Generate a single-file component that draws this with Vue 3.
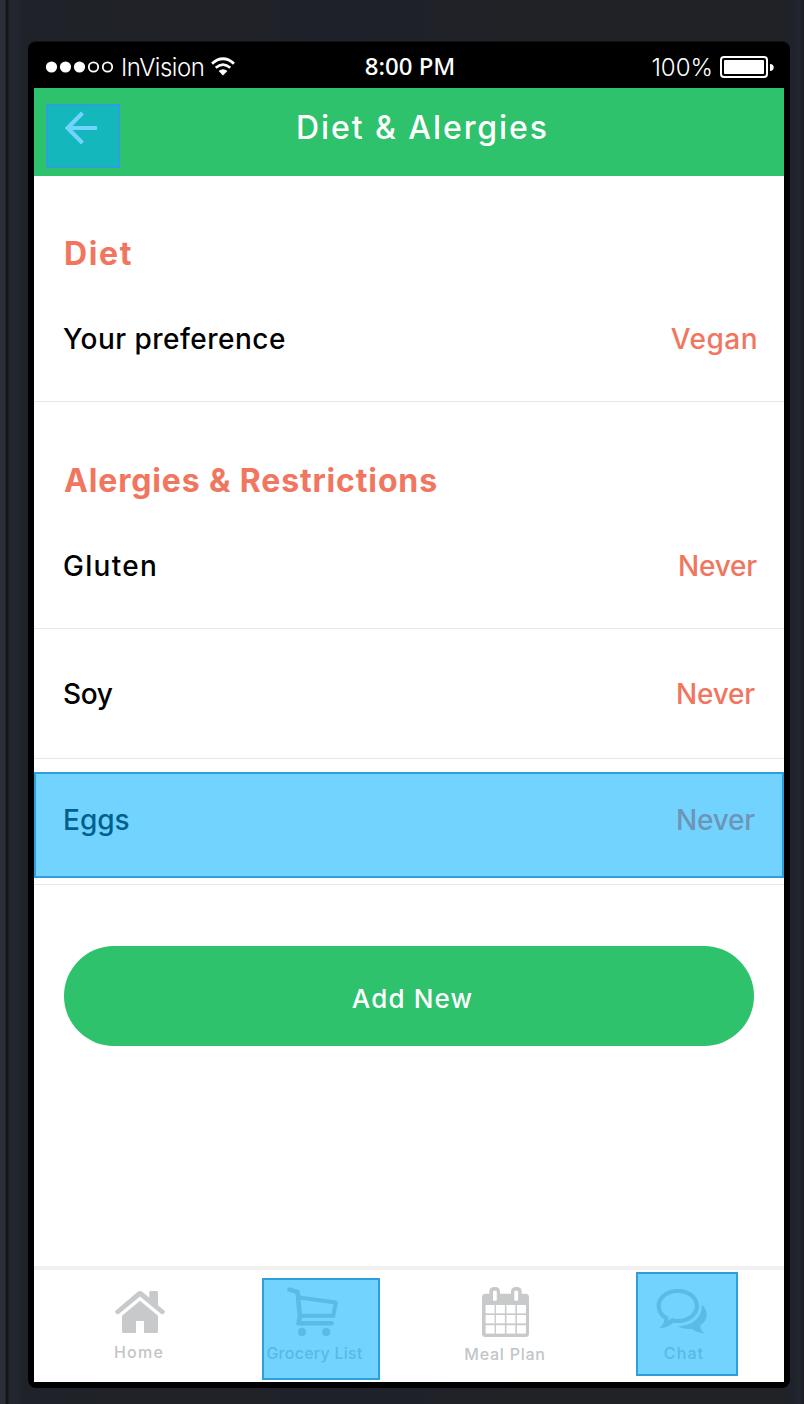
<script setup>
const dietRows = [{ label: 'Your preference', value: 'Vegan', cls: 'preference' }]
const allergyRows = [
  { label: 'Gluten', value: 'Never', cls: 'gluten' },
  { label: 'Soy', value: 'Never', cls: 'soy' },
  { label: 'Eggs', value: 'Never', cls: 'eggs', hotspot: true },
]
</script>

<template>
  <div class="device">
    <div class="bezel">
      <div class="status">
        <div class="carrier">
          <svg class="signal" width="70" height="14" viewBox="0 0 70 14">
            <circle cx="6.5" cy="7" r="5.6" fill="#fff" />
            <circle cx="20.5" cy="7" r="5.6" fill="#fff" />
            <circle cx="34.5" cy="7" r="5.6" fill="#fff" />
            <circle cx="48.5" cy="7" r="4.7" fill="none" stroke="#fff" stroke-width="1.8" />
            <circle cx="62.5" cy="7" r="4.7" fill="none" stroke="#fff" stroke-width="1.8" />
          </svg>
          <span class="carrier-name">InVision</span>
          <svg class="wifi" width="26" height="20" viewBox="0 0 26 20">
            <path d="M2 6.6 Q13 -3 24 6.6" fill="none" stroke="#fff" stroke-width="2.8" />
            <path d="M5.7 10.7 Q13 4.4 20.3 10.7" fill="none" stroke="#fff" stroke-width="2.6" />
            <path d="M8.6 14 Q13 10.4 17.4 14 L13 18.6 Z" fill="#fff" />
          </svg>
        </div>
        <span class="time">8:00 PM</span>
        <div class="power">
          <span class="percent">100%</span>
          <svg width="55" height="22" viewBox="0 0 55 22">
            <rect x="1" y="1" width="46" height="20" rx="3" fill="none" stroke="#fff" stroke-width="2" />
            <rect x="4" y="4" width="40" height="14" rx="1" fill="#fff" />
            <path d="M50 8 C55 8 55 15 50 15 Z" fill="#fff" />
          </svg>
        </div>
      </div>

      <div class="screen">
        <header class="header">
          <button class="back" aria-label="Back">
            <svg width="34" height="34" viewBox="0 0 34 34">
              <path d="M33 17 H4 M18.5 2 L3.5 17 L18.5 32" fill="none" stroke="#fff" stroke-width="4" />
            </svg>
            <span class="hotspot"></span>
          </button>
          <h1>Diet &amp; Alergies</h1>
        </header>

        <main class="content">
          <h2 class="diet-title">Diet</h2>
          <div v-for="r in dietRows" :key="r.label" class="row" :class="r.cls">
            <span class="label">{{ r.label }}</span>
            <span class="value">{{ r.value }}</span>
          </div>
          <h2 class="allergy-title">Alergies &amp; Restrictions</h2>
          <div v-for="r in allergyRows" :key="r.label" class="row" :class="r.cls">
            <span class="label">{{ r.label }}</span>
            <span class="value">{{ r.value }}</span>
            <span v-if="r.hotspot" class="hotspot"></span>
          </div>
          <button class="add"><span>Add New</span></button>
        </main>

        <nav class="tabs">
          <div class="tab home">
            <svg width="50" height="42" viewBox="0 0 50 42">
              <path d="M22.8 .8 Q25 -.8 27.2 .8 L34.3 6.8 V1.2 Q34.3 0 35.5 0 H41.8 Q43 0 43 1.2 V14.2 L49.5 19.7 Q50.4 20.7 49.5 21.7 L48.2 23.1 Q47.2 24 46.2 23.1 L25 5.4 L3.8 23.1 Q2.8 24 1.8 23.1 L.5 21.7 Q-.4 20.7 .5 19.7 Z" />
              <path d="M25 9.8 L43 24.8 V40.4 Q43 42 41.4 42 H29 V30 H21 V42 H8.6 Q7 42 7 40.4 V24.8 Z" />
            </svg>
            <span>Home</span>
          </div>
          <div class="tab grocery">
            <svg width="54" height="52" viewBox="0 0 54 52">
              <g fill="none" stroke="#c8c9cb" stroke-width="4.6" stroke-linecap="round" stroke-linejoin="round">
                <path d="M3.4 3.6 L11.6 6 L14 31 L12.4 37.3 H45.6" />
                <path d="M13 11.5 L49.8 16.6 L47.3 29.8 H14" stroke-width="4" />
              </g>
              <circle cx="16" cy="46" r="4.2" />
              <circle cx="40.2" cy="46" r="4.2" />
            </svg>
            <span>Grocery List</span>
            <i class="hotspot"></i>
          </div>
          <div class="tab meal">
            <svg width="48" height="52" viewBox="0 0 48 52">
              <rect x="0" y="7.7" width="47" height="43.3" rx="3.5" />
              <rect x="7.3" y="1" width="10.7" height="16" rx="4.5" />
              <rect x="29" y="1" width="10.7" height="16" rx="4.5" />
              <g fill="#fff">
                <rect x="11" y="4.7" width="3.8" height="10" rx="1" />
                <rect x="32.3" y="4.7" width="3.8" height="10" rx="1" />
                <template v-for="y in [19, 29, 39.2]" :key="y">
                  <rect v-for="x in [3.6, 13.9, 24.4, 34.9]" :key="x" :x="x" :y="y" width="9" height="8.4" />
                </template>
              </g>
            </svg>
            <span>Meal Plan</span>
          </div>
          <div class="tab chat">
            <svg width="52" height="48" viewBox="0 0 52 48">
              <path fill-rule="evenodd" d="M21.7 1 C33.8 1 43 8.4 43 18 C43 27.6 33.8 35 21.7 35 Q19.5 35 17.3 34.7 C13.5 38 8.5 40 3.2 40.1 C6.3 37.6 8 35 8.3 31.5 C3.5 28.3 .7 23.5 .7 18 C.7 8.4 9.8 1 21.7 1 Z M21.7 5 C12 5 4.8 10.8 4.8 18 C4.8 22.7 7.7 26.6 12.6 29 L12 32.8 L15.8 30.1 Q18.6 31 21.7 31 C31.5 31 38.8 25.2 38.8 18 C38.8 10.8 31.5 5 21.7 5 Z" />
              <path d="M45.8 16.6 C52.4 22.5 52.8 31.8 44.2 37.2 C44.4 41 46 43.5 48.8 45.5 C43.5 45.5 39.3 43.5 35.8 40.8 C30.7 41.5 26 40.5 22 38.3 C36 38 46.5 30 45.8 16.6 Z" />
            </svg>
            <span>Chat</span>
            <i class="hotspot"></i>
          </div>
        </nav>
      </div>
    </div>
  </div>
</template>

<style>
body { margin: 0; background: #202329; }
</style>

<style scoped>
* { box-sizing: border-box; }
.device {
  width: 804px; height: 1404px; padding: 41px 14px 16px 28px; overflow: hidden;
  background: linear-gradient(90deg, #2b2f39 0, #2b2f39 5px, #15171b 6px, #15171b 8px, #22262f 9px, #22262f 17px, #1f2228 24px, #202227 240px, #1e212a 320px, #202226 520px, #202226 780px, #1e222b 794px, #242630 799px, #1a1d24 804px);
  font-family: Inter, "Liberation Sans", sans-serif;
}
.bezel { width: 762px; height: 1347px; padding: 0 6px 6px; background: #000; border-radius: 8px; border-top: 1px solid #101114; }
.status { height: 46px; display: grid; grid-template-columns: 1fr auto 1fr; align-items: center; padding: 4px 9px 0 11px; color: #fff; }
.carrier, .power { display: flex; align-items: center; }
.power { justify-content: flex-end; }
.carrier-name { margin-left: 6px; padding-top: 2px; font: 300 24px/28px Inter, sans-serif; letter-spacing: -.5px; }
.wifi { margin-left: 6px; }
.time { padding-bottom: 2px; font: 500 24px/28px "Noto Sans", sans-serif; }
.percent { margin-right: 7px; padding-top: 2px; font: 300 24px/28px Inter, sans-serif; letter-spacing: 0; }
.screen { display: flex; flex-direction: column; width: 750px; height: 1294px; background: #fff; }
.header { height: 88px; display: flex; align-items: flex-start; background: #2dc26b; }
button { border: 0; padding: 0; }
.back { position: relative; display: flex; align-items: flex-start; width: 74px; height: 64px; margin: 16px 0 0 12px; padding: 7px 0 0 18px; background: none; }
.back svg { display: block; }
.hotspot { position: absolute; inset: 0; background: rgba(0, 175, 255, .55); border: 2px solid #2d9fdb; background-clip: padding-box; }
h1 { margin: 20px 0 0 176px; color: #fff; font-size: 32px; line-height: 40px; font-weight: 500; letter-spacing: 1.93px; white-space: nowrap; }
.content { flex: 1; }
h2 { margin: 0; padding-left: 30px; color: #f0765f; font-size: 32px; line-height: 40px; font-weight: 700; white-space: nowrap; }
.diet-title { padding-top: 58px; letter-spacing: 1.6px; }
.allergy-title { padding-top: 59px; letter-spacing: .85px; }
.row { position: relative; display: flex; justify-content: space-between; border-bottom: 1px solid #e8e8e8; padding: 0 29px; font-size: 28px; line-height: 40px; font-weight: 500; }
.label { color: #000; }
.value { color: #f0765f; letter-spacing: -.2px; }
.preference { height: 128px; padding-top: 45px; padding-right: 26px; }
.preference .label { letter-spacing: .48px; }
.preference .value { letter-spacing: .5px; }
.gluten { height: 128px; padding-top: 45px; padding-right: 27px; }
.gluten .label { letter-spacing: 1.3px; }
.soy { height: 130px; padding-top: 45px; }
.soy .label { letter-spacing: -.4px; }
.eggs { height: 126px; padding-top: 41px; }
.eggs .hotspot { inset: 13px 0 6px; }
.add { display: block; width: 690px; height: 100px; margin: 61px 30px 0; padding: 6px 0 0 7px; border-radius: 50px; background: #2dc26b; color: #fff; font: 500 26px/40px Inter, sans-serif; letter-spacing: 1.15px; }
.tabs { display: flex; height: 116px; border-top: 4px solid #f0f0f0; }
.tab { position: relative; display: flex; flex-direction: column; align-items: center; color: #c2c5c8; font-size: 16px; line-height: 20px; font-weight: 500; white-space: nowrap; letter-spacing: .6px; }
.tab svg { flex: none; fill: #c8c9cb; }
.home { width: 100px; margin-left: 56px; padding-top: 21px; }
.home span { margin-top: 9px; margin-left: -2px; letter-spacing: 1.2px; }
.grocery { width: 118px; height: 102px; margin: 8px 0 0 72px; padding-top: 8px; }
.grocery svg { margin-right: 16px; }
.grocery span { margin-top: 5px; margin-left: -13px; letter-spacing: .25px; }
.meal { width: 110px; margin-left: 71px; padding-top: 16px; }
.meal span { margin-top: 6px; margin-left: -2px; letter-spacing: .75px; }
.chat { width: 102px; height: 104px; margin: 2px 0 0 75px; padding: 16px 10px 0 0; }
.chat span { margin-top: 7px; margin-left: 4px; letter-spacing: 1.1px; }
</style>
